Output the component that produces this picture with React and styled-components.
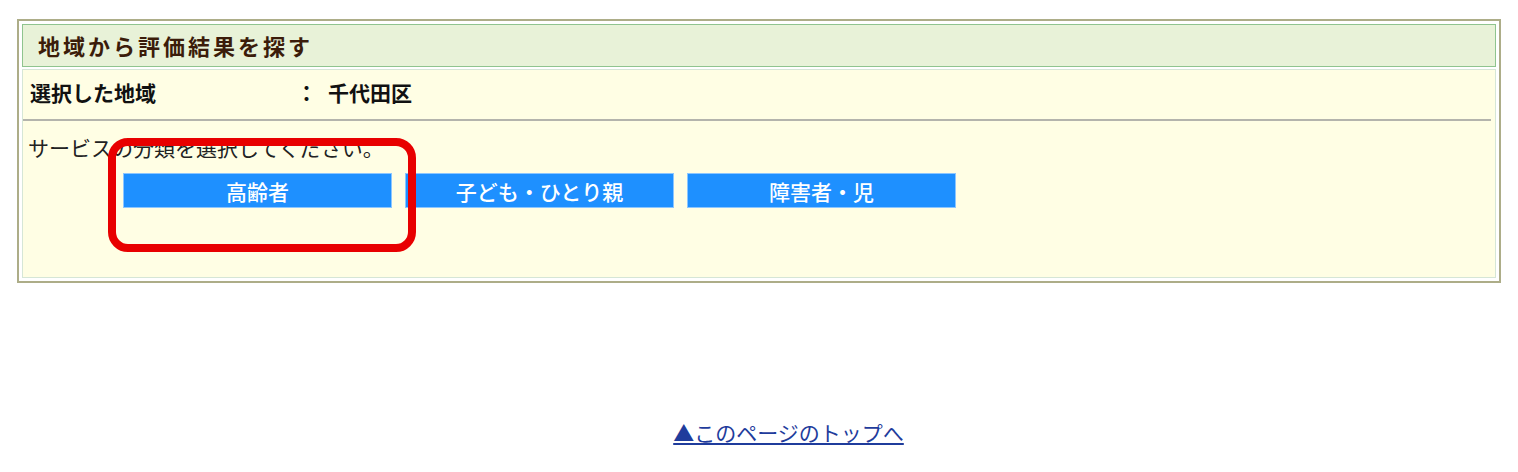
import React from "react";
import styled, { createGlobalStyle } from "styled-components";

const GlobalStyle = createGlobalStyle`
  body {
    margin: 0;
    background: #ffffff;
    font-family: "Noto Sans CJK JP", "Noto Sans", sans-serif;
    color: #111;
  }
`;

export const Frame = styled.div`
  margin: 19px 17px 0;
  border: 2px solid #adad88;
  padding: 3px;
  background: #fff;
`;

export const Heading = styled.h2`
  margin: 0;
  height: 41px;
  display: flex;
  align-items: center;
  padding: 0 0 2px 15px;
  box-sizing: border-box;
  height: 43px;
  background: #e8f2d8;
  border: 1px solid #8fc48f;
  font-size: 22px;
  font-weight: 700;
  letter-spacing: 3px;
  color: #3b1c0a;
`;

export const Body = styled.div`
  position: relative;
  margin-top: 2px;
  height: 207px;
  background: #fffee4;
  border: 1px solid #d6e6d6;
`;

export const InfoRow = styled.div`
  display: flex;
  align-items: center;
  height: 44px;
  padding: 0 0 5px 7px;
  font-size: 21px;
  line-height: 26px;
  font-weight: 700;
  border-bottom: 2px solid #b4b4ac;
  margin-right: 4px;
`;

export const Label = styled.span`
  width: 266px;
`;

export const Colon = styled.span`
  width: 32px;
`;

export const Lead = styled.p`
  margin: 13px 0 0 5px;
  font-size: 21px;
  line-height: 26px;
  color: #222;
`;

export const ButtonList = styled.div`
  display: flex;
  gap: 13px;
  margin: 13px 0 0 100px;
`;

export const CategoryButton = styled.button`
  width: 269px;
  height: 35px;
  background: #1e90ff;
  border: 1px solid #8cc6ff;
  color: #fff;
  font-family: inherit;
  font-size: 21px;
  line-height: 26px;
  font-weight: 500;
  cursor: pointer;
  padding: 0;
`;

export const Highlight = styled.div`
  position: absolute;
  left: 85px;
  top: 68px;
  width: 292px;
  height: 98px;
  border: 8px solid #e80000;
  border-radius: 20px;
  pointer-events: none;
`;

export const Footer = styled.div`
  display: flex;
  justify-content: center;
  padding: 134px 0 0 59px;
`;

export const TopLink = styled.a`
  font-size: 21px;
  color: #1f3c9c;
  text-decoration: underline;
`;

const categories = ["高齢者", "子ども・ひとり親", "障害者・児"];

const App = () => {
  return (
    <>
      <GlobalStyle />
      <Frame>
        <Heading>地域から評価結果を探す</Heading>
        <Body>
          <InfoRow>
            <Label>選択した地域</Label>
            <Colon>：</Colon>
            <span>千代田区</span>
          </InfoRow>
          <Lead>サービスの分類を選択してください。</Lead>
          <ButtonList>
            {categories.map((c) => (
              <CategoryButton key={c}>{c}</CategoryButton>
            ))}
          </ButtonList>
          <Highlight />
        </Body>
      </Frame>
      <Footer>
        <TopLink href="#top">▲このページのトップへ</TopLink>
      </Footer>
    </>
  );
};

export default App;
